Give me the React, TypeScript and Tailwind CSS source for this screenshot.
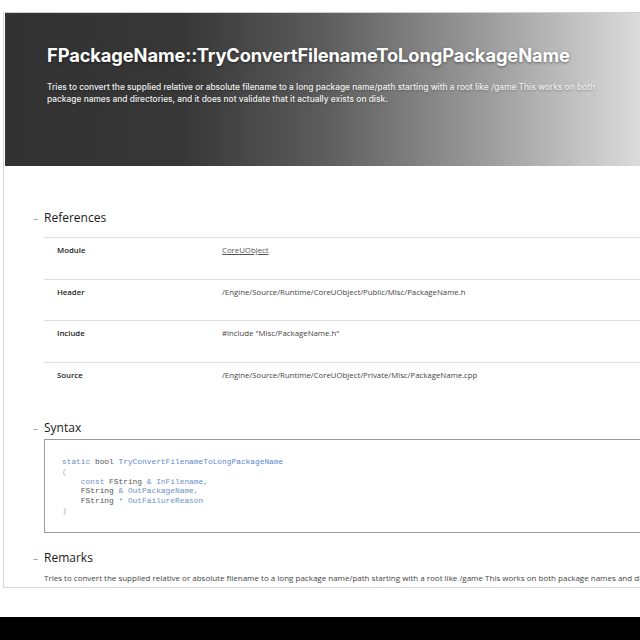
import React from 'react';

const rows = [
  { label: 'Module', value: 'CoreUObject', link: true },
  { label: 'Header', value: '/Engine/Source/Runtime/CoreUObject/Public/Misc/PackageName.h' },
  { label: 'Include', value: '#include "Misc/PackageName.h"' },
  { label: 'Source', value: '/Engine/Source/Runtime/CoreUObject/Private/Misc/PackageName.cpp' },
];

function SectionTitle({ children }: { children: React.ReactNode }) {
  return (
    <div className="flex items-center h-[18px]">
      <span className="w-[11px] text-[10px] text-[#999] leading-none">–</span>
      <h2 className="text-[12px] font-medium text-[#1a1a1a] leading-none">{children}</h2>
    </div>
  );
}

export default function App() {
  return (
    <div className="w-[640px] h-[640px] bg-white overflow-hidden flex flex-col font-['Open_Sans',sans-serif]">
      <div className="mt-[12px] ml-[3px] h-[576px] border-l border-b border-[#d6d6d6] flex flex-col overflow-hidden">
        <header className="ml-[1px] h-[154px] w-[636px] shrink-0 border-t border-[#cfcfcf] bg-[linear-gradient(90deg,#323232_0%,#373737_28%,#5c5c5c_50%,#9a9a9a_75%,#dcdcdc_100%)] pl-[42px] pt-[30px] font-['Inter',sans-serif]">
          <h1 className="text-[18.3px] font-bold text-white leading-[24px] tracking-[-0.1px] [text-shadow:0_1px_3px_rgba(0,0,0,0.45)]">
            FPackageName::TryConvertFilenameToLongPackageName
          </h1>
          <p className="mt-[14px] w-[565px] text-[8.4px] font-medium text-[#f2f2f2] leading-[12px] [text-shadow:0_1px_2px_rgba(0,0,0,0.3)]">
            Tries to convert the supplied relative or absolute filename to a long package name/path starting with a root like /game This works on both package names and directories, and it does not validate that it actually exists on disk.
          </p>
        </header>

        <div className="pl-[29px] pt-[43px]">
          <SectionTitle>References</SectionTitle>
          <div className="ml-[11px] mt-[10px] w-[620px]">
            {rows.map((r) => (
              <div key={r.label} className="flex h-[41.5px] border-t border-[#dedede] pt-[7px] text-[7.8px] leading-[11px]">
                <div className="w-[178px] pl-[13px] font-semibold text-[#222]">{r.label}</div>
                <div className={r.link ? 'text-[#555] underline' : 'text-[#444]'}>{r.value}</div>
              </div>
            ))}
          </div>

          <div className="mt-[16px]">
            <SectionTitle>Syntax</SectionTitle>
          </div>
          <div className="ml-[11px] mt-[2px] w-[620px] h-[94px] border border-[#9a9a9a] pl-[17px] pt-[17px] font-['Liberation_Mono',monospace] text-[7.85px] leading-[9.8px] whitespace-pre">
            <div><span className="text-[#6b8fc9]">static</span><span className="text-[#555]"> bool </span><span className="text-[#5a8ad0]">TryConvertFilenameToLongPackageName</span></div>
            <div className="text-[#aaa]">(</div>
            <div><span className="text-[#6b8fc9]">    const</span><span className="text-[#555]"> FString </span><span className="text-[#6b8fc9]">&amp; InFilename,</span></div>
            <div><span className="text-[#555]">    FString </span><span className="text-[#6b8fc9]">&amp; OutPackageName,</span></div>
            <div><span className="text-[#555]">    FString </span><span className="text-[#6b8fc9]">* OutFailureReason</span></div>
            <div className="text-[#aaa]">)</div>
          </div>

          <div className="mt-[16px]">
            <SectionTitle>Remarks</SectionTitle>
          </div>
          <p className="ml-[11px] mt-[5px] w-[596px] overflow-hidden whitespace-nowrap text-[8px] leading-[11px] text-[#444]">
            Tries to convert the supplied relative or absolute filename to a long package name/path starting with a root like /game This works on both package names and directories, and it does not validate that it actually exists on disk.
          </p>
        </div>
      </div>
      <div className="mt-[29px] h-[23px] bg-black" />
    </div>
  );
}
